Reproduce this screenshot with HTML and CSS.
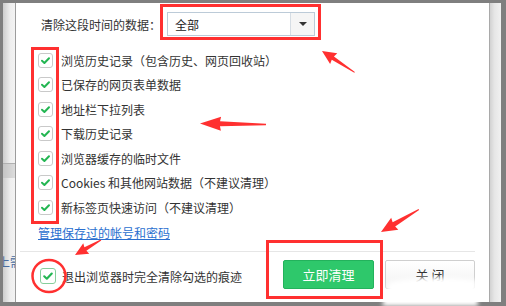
FILE: index.html
```html
<!DOCTYPE html>
<html lang="zh-CN">
<head>
    <meta charset="UTF-8">
    <title>清除上网痕迹</title>
    <link rel="stylesheet" href="styles.css">
</head>
<body>
    <div class="screen">
        <div class="page-left">
            <div class="page-band"></div>
            <div class="page-text">上需</div>
        </div>

        <div class="dialog">
            <div class="range-row">
                <span class="range-label">清除这段时间的数据：</span>
                <div class="select">
                    <span class="select-value">全部</span>
                    <span class="select-btn"><i class="caret"></i></span>
                </div>
            </div>

            <ul class="options">
                <li><span class="check"></span>浏览历史记录（包含历史、网页回收站）</li>
                <li><span class="check"></span>已保存的网页表单数据</li>
                <li><span class="check"></span>地址栏下拉列表</li>
                <li><span class="check"></span>下载历史记录</li>
                <li><span class="check"></span>浏览器缓存的临时文件</li>
                <li><span class="check"></span>Cookies 和其他网站数据（不建议清理）</li>
                <li><span class="check"></span>新标签页快速访问（不建议清理）</li>
            </ul>

            <a class="manage-link" href="#">管理保存过的帐号和密码</a>

            <div class="footer">
                <label class="exit-opt"><span class="check check-green"></span>退出浏览器时完全清除勾选的痕迹</label>
                <div class="buttons">
                    <button class="btn btn-primary">立即清理</button>
                    <button class="btn btn-close">关 闭</button>
                </div>
            </div>
        </div>

        <div class="scroll"></div>
    </div>

    <!-- red annotations drawn over the screenshot -->
    <svg class="marks" width="506" height="306" viewBox="0 0 506 306">
        <defs>
            <filter id="smudge"><feGaussianBlur stdDeviation="2"/></filter>
        </defs>
        <path d="M389 282 Q430 274 476 280 L478 306 L382 306 Z" fill="#fff" filter="url(#smudge)"/>

        <g fill="none" stroke="#ff3030" stroke-width="3">
            <rect x="161.5" y="5.5" width="158" height="33"/>
            <rect x="32.5" y="48.5" width="25" height="174"/>
            <rect x="267.5" y="241.5" width="114" height="56"/>
        </g>
        <ellipse cx="49" cy="276" rx="16.5" ry="16" fill="none" stroke="#ff3030" stroke-width="2.5"/>

        <g fill="#ff3030">
            <polygon transform="translate(322 51) rotate(-146.7)" points="-39,-0.5 -13,-2 -14,-6.5 0,0 -14,6.5 -13,2 -39,0.5"/>
            <polygon transform="translate(200 123.5) rotate(180.9)" points="-66,-0.8 -20,-2.5 -21,-7 0,0 -21,7 -20,2.5 -66,0.8"/>
            <polygon transform="translate(381 232) rotate(149.3)" points="-44,-0.5 -15,-2.5 -16,-7 0,0 -16,7 -15,2.5 -44,0.5"/>
            <polygon transform="translate(75 255) rotate(150)" points="-30,-0.5 -12,-2 -13,-6 0,0 -13,6 -12,2 -30,0.5"/>
        </g>
    </svg>
</body>
</html>
```

FILE: styles.css
```css
body {
    margin: 0;
    width: 506px;
    height: 306px;
    overflow: hidden;
    background: #7f7f7f;
    font-family: "Noto Sans CJK SC", "Microsoft YaHei", sans-serif;
    font-size: 12px;
    color: #333;
    position: relative;
}
.screen {
    display: flex;
    height: 299px;
    padding-top: 3px;
}
.page-left {
    width: 12px;
    margin-left: 3px;
    background: linear-gradient(to right, #cdcdcd, #eeeeee 60%, #f3f3f3);
    border-right: 1px solid #9c9c9c;
    display: flex;
    flex-direction: column;
    overflow: hidden;
}
.page-band {
    height: 14px;
    margin-top: 160px;
    background: linear-gradient(to right, #c4c4c4, #dcdcdc);
    border-top: 1px solid #b0b0b0;
}
.page-text {
    margin-top: 75px;
    margin-left: -5px;
    white-space: nowrap;
    color: #4a6da0;
    font-size: 12px;
}
.dialog {
    width: 473px;
    background: #fff;
    display: flex;
    flex-direction: column;
}
.scroll {
    width: 11px;
    background: linear-gradient(to right, #d2d2d2, #e6e6e6 40%, #f1f1f1);
    border-left: 1px solid #a9a9a9;
}

/* time range */
.range-row {
    display: flex;
    align-items: center;
    gap: 6px;
    margin-top: 9px;
    padding-left: 25px;
    height: 24px;
}
.select {
    width: 146px;
    height: 22px;
    border: 1px solid #bccbd8;
    display: flex;
    align-items: center;
}
.select-value {
    flex: 1;
    padding-left: 7px;
    color: #222;
}
.select-btn {
    width: 23px;
    height: 100%;
    background: #f5f5f5;
    border-left: 1px solid #d6dde4;
    display: flex;
    align-items: center;
    justify-content: center;
}
.caret {
    width: 0;
    height: 0;
    border-left: 4px solid transparent;
    border-right: 4px solid transparent;
    border-top: 4px solid #333;
}

/* options */
.options {
    list-style: none;
    margin: 11.75px 0 0;
    padding: 0 0 0 22px;
}
.options li {
    height: 24.5px;
    display: flex;
    align-items: center;
    gap: 8px;
    white-space: nowrap;
}
.check {
    width: 13px;
    height: 13px;
    flex-shrink: 0;
    border: 1px solid #c9c9c9;
    border-radius: 3px;
    background: #fff url("data:image/svg+xml,%3Csvg xmlns='http://www.w3.org/2000/svg' viewBox='0 0 13 13'%3E%3Cpath d='M3 6.8 L5.4 9 L10 4.2' fill='none' stroke='%2324b653' stroke-width='2' stroke-linecap='round' stroke-linejoin='round'/%3E%3C/svg%3E") center / 13px 13px no-repeat;
}
.check-green {
    width: 14px;
    height: 14px;
    border-color: #86cf9c;
    background-size: 14px 14px;
}
.manage-link {
    margin: 4px 0 0 22px;
    line-height: 20px;
    color: #2a6fcf;
    text-decoration: underline;
    align-self: flex-start;
}

/* footer */
.footer {
    margin: 8px 14px 0 4px;
    border-top: 1px solid #e6e6e6;
    padding: 8px 0 0 20px;
    display: flex;
    align-items: center;
    justify-content: space-between;
}
.exit-opt {
    display: flex;
    align-items: center;
    gap: 6px;
    margin-top: 3px;
}
.buttons {
    display: flex;
    gap: 11px;
}
.btn {
    height: 29px;
    font-family: inherit;
    font-size: 13px;
    border-radius: 2px;
    padding: 0;
}
.btn-primary {
    width: 91px;
    background: #2ec86b;
    border: 1px solid #23b25c;
    color: #fff;
}
.btn-close {
    width: 90px;
    background: linear-gradient(#ffffff, #f2f2f2);
    border: 1px solid #cfcfcf;
    color: #333;
}

.marks {
    position: absolute;
    left: 0;
    top: 0;
}
```
